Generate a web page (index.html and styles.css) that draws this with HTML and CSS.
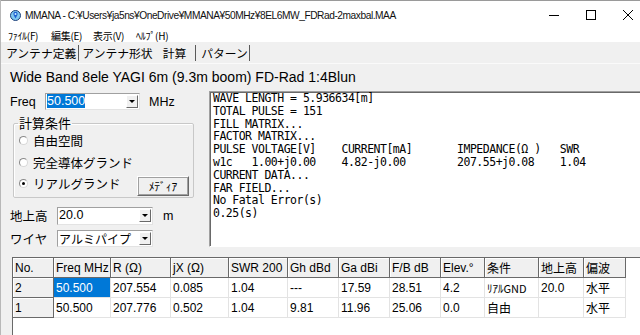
FILE: index.html
```html
<!DOCTYPE html>
<html lang="ja">
<head>
<meta charset="utf-8">
<title>MMANA</title>
<link rel="stylesheet" href="styles.css">
</head>
<body>
<div class="window">
  <div class="titlebar">
    <svg class="appicon" width="11" height="13" viewBox="0 0 11 13">
      <circle cx="5.5" cy="6.5" r="5" fill="#7fc8f0" stroke="#1c3f7a" stroke-width="1"/>
      <path d="M5.5 2.8 C3.6 2.8 3 4.6 3.6 6 L5.5 9.6 L7.4 6 C8 4.6 7.4 2.8 5.5 2.8 Z" fill="#1f5fd0"/>
      <circle cx="5.5" cy="5" r="1" fill="#cfefff"/>
    </svg>
    <span class="title">MMANA - C:¥Users¥ja5ns¥OneDrive¥MMANA¥50MHz¥8EL6MW_FDRad-2maxbal.MAA</span>
    <div class="winbtns">
      <svg width="10" height="10" viewBox="0 0 10 10"><path d="M0 5.5 H10" stroke="#000" stroke-width="1"/></svg>
      <svg width="10" height="10" viewBox="0 0 10 10"><rect x="0.5" y="0.5" width="9" height="9" fill="none" stroke="#000" stroke-width="1"/></svg>
      <svg width="10" height="10" viewBox="0 0 10 10"><path d="M0 0 L10 10 M10 0 L0 10" stroke="#000" stroke-width="1"/></svg>
    </div>
  </div>
  <div class="menubar">
    <span class="menu">ﾌｧｲﾙ(F)</span>
    <span class="menu">編集(E)</span>
    <span class="menu">表示(V)</span>
    <span class="menu">ﾍﾙﾌﾟ(H)</span>
  </div>
  <div class="tabs">
    <span class="tab t1 sep">アンテナ定義</span>
    <span class="tab t2">アンテナ形状</span>
    <span class="tab t3 active sep">計算</span>
    <span class="tab t4 sep">パターン</span>
  </div>
  <div class="heading">Wide Band 8ele YAGI 6m (9.3m boom) FD-Rad 1:4Blun</div>
  <div class="main">
    <div class="left">
      <div class="row freqrow">
        <span class="lbl">Freq</span>
        <div class="combo freqcombo"><span class="val"><span class="selected">50.500</span></span><span class="drop"></span></div>
        <span class="unit">MHz</span>
      </div>
      <fieldset class="group">
        <legend>計算条件</legend>
        <div class="radio"><span class="rb"></span><span class="rt">自由空間</span></div>
        <div class="radio"><span class="rb"></span><span class="rt">完全導体グランド</span></div>
        <div class="radio"><span class="rb checked"></span><span class="rt">リアルグランド</span><button class="btn">ﾒﾃﾞｨｱ</button></div>
      </fieldset>
      <div class="row hrow">
        <span class="lbl jlbl">地上高</span>
        <div class="combo ccombo"><span class="val">20.0</span><span class="drop"></span></div>
        <span class="unit munit">m</span>
      </div>
      <div class="row wrow">
        <span class="lbl jlbl">ワイヤ</span>
        <div class="combo ccombo"><span class="val jval">アルミパイプ</span><span class="drop"></span></div>
      </div>
    </div>
    <pre class="output">WAVE LENGTH = 5.936634[m]
TOTAL PULSE = 151
FILL MATRIX...
FACTOR MATRIX...
PULSE VOLTAGE[V]    CURRENT[mA]       IMPEDANCE(Ω )   SWR
w1c   1.00+j0.00    4.82-j0.00        207.55+j0.08    1.04
CURRENT DATA...
FAR FIELD...
No Fatal Error(s)
0.25(s)</pre>
  </div>
  <div class="gridwrap">
    <table class="grid">
      <colgroup>
        <col style="width:41px"><col style="width:57px"><col style="width:60px"><col style="width:58px">
        <col style="width:59px"><col style="width:51px"><col style="width:51px"><col style="width:51px">
        <col style="width:44px"><col style="width:54px"><col style="width:45px"><col style="width:42px">
      </colgroup>
      <thead>
        <tr>
          <th>No.</th><th>Freq MHz</th><th>R (Ω)</th><th>jX (Ω)</th><th>SWR 200</th><th>Gh dBd</th>
          <th>Ga dBi</th><th>F/B dB</th><th>Elev.°</th><th>条件</th><th>地上高</th><th>偏波</th>
        </tr>
      </thead>
      <tbody>
        <tr>
          <th>2</th><td class="selected">50.500</td><td>207.554</td><td>0.085</td><td>1.04</td><td>---</td>
          <td>17.59</td><td>28.51</td><td>4.2</td><td class="small">ﾘｱﾙGND</td><td>20.0</td><td>水平</td>
        </tr>
        <tr>
          <th>1</th><td>50.500</td><td>207.776</td><td>0.502</td><td>1.04</td><td>9.81</td>
          <td>11.96</td><td>25.06</td><td>0.0</td><td>自由</td><td></td><td>水平</td>
        </tr>
      </tbody>
    </table>
  </div>
</div>
</body>
</html>
```
FILE: styles.css
```css
html, body {
  margin: 0;
  padding: 0;
}
body {
  width: 640px;
  height: 335px;
  overflow: hidden;
  background: #f0f0f0;
  font-family: "Liberation Sans", "Noto Sans CJK JP", sans-serif;
  font-size: 12px;
  color: #000;
}
.window {
  width: 640px;
  height: 335px;
  display: flex;
  flex-direction: column;
  overflow: hidden;
  border-left: 1px solid #b8b8b8;
  box-sizing: border-box;
}
.titlebar {
  height: 29px;
  flex: none;
  background: #fff;
  border-top: 1px solid #9a9a9a;
  box-sizing: border-box;
  display: flex;
  align-items: center;
  padding-left: 9px;
}
.appicon {
  flex: none;
  margin-top: 1px;
}
.title {
  margin-left: 4px;
  font-family: "Liberation Sans", "Noto Sans CJK JP", sans-serif;
  font-size: 10.2px;
  letter-spacing: -0.45px;
  white-space: nowrap;
  color: #111;
}
.winbtns {
  margin-left: auto;
  display: flex;
  gap: 27px;
  padding-right: 7px;
  align-items: center;
}
.menubar {
  height: 13px;
  flex: none;
  background: #fff;
  display: grid;
  grid-template-columns: 43px 42px 43px 43px;
  align-items: center;
  font-size: 10px;
  font-family: "Noto Sans CJK JP", sans-serif;
  line-height: 13px;
  padding-left: 7px;
}
.menu { white-space: nowrap; letter-spacing: -0.3px; }
.tabs {
  height: 22px;
  flex: none;
  box-sizing: border-box;
  border-bottom: 1px solid #fafafa;
  display: flex;
  align-items: center;
  padding-left: 5px;
  font-family: "Noto Sans CJK JP", sans-serif;
  font-size: 11.8px;
}
.tab {
  white-space: nowrap;
  line-height: 16px;
  padding: 0 2px 0 0;
}
.tab.sep { border-right: 1px solid #5a5a5a; }
.t2 { margin-left: 3px; }
.t3 { margin-left: 8px; padding-right: 9px; }
.t4 { margin-left: 5px; padding-right: 1px; }
.heading {
  height: 27px;
  flex: none;
  line-height: 26px;
  padding-left: 9px;
  font-family: "Liberation Sans", "Noto Sans CJK JP", sans-serif;
  font-size: 14px;
  white-space: nowrap;
}
.main {
  display: flex;
  height: 156px;
  flex: none;
}
.left {
  width: 207px;
  flex: none;
  padding-left: 9px;
  box-sizing: border-box;
}
.row {
  display: flex;
  align-items: center;
}
.freqrow {
  margin-top: 2px;
  height: 17px;
}
.lbl {
  font-family: "Liberation Sans", "Noto Sans CJK JP", sans-serif;
  font-size: 12.5px;
  width: 35px;
  flex: none;
}
.jlbl {
  font-family: "Noto Sans CJK JP", sans-serif;
  font-size: 12.5px;
  width: 47px;
}
.combo {
  height: 17px;
  box-sizing: border-box;
  background: #fff;
  border: 1px solid #a0a0a0;
  border-right-color: #e3e3e3;
  border-bottom-color: #e3e3e3;
  display: flex;
  align-items: center;
  padding-left: 1px;
}
.freqcombo { width: 95px; }
.ccombo { width: 96px; height: 18px; }
.wrow .ccombo { height: 17px; }
.val {
  flex: 1;
  font-size: 12.5px;
  line-height: 13px;
  font-family: "Liberation Sans", "Noto Sans CJK JP", sans-serif;
}
.selected {
  background: #0078d7;
  color: #fff;
}
.jval {
  font-family: "Noto Sans CJK JP", sans-serif;
  font-size: 12px;
}
.drop {
  width: 12px;
  height: 13px;
  margin-right: 1px;
  box-sizing: border-box;
  background: #f0f0f0;
  border: 1px solid #fff;
  border-right-color: #696969;
  border-bottom-color: #696969;
  position: relative;
  flex: none;
}
.drop::after {
  content: "";
  position: absolute;
  left: 2px;
  top: 4px;
  border-left: 3px solid transparent;
  border-right: 3px solid transparent;
  border-top: 3px solid #000;
}
.unit {
  margin-left: 9px;
  font-size: 12.5px;
}
.munit { margin-left: 10px; }
.group {
  margin: 6px 0 0 3px;
  width: 181px;
  box-sizing: border-box;
  padding: 0 4px 2px 5px;
  border: 1px solid #c8c8c8;
  border-radius: 2px;
  box-shadow: inset 1px 1px 0 #fff;
}
.group legend {
  font-family: "Noto Sans CJK JP", sans-serif;
  font-size: 13px;
  line-height: 14px;
  padding: 0 1px;
  margin-left: -1px;
}
.radio {
  height: 21.5px;
  display: flex;
  align-items: center;
  font-family: "Noto Sans CJK JP", sans-serif;
  font-size: 12.5px;
}
.rb {
  width: 9px;
  height: 9px;
  box-sizing: border-box;
  border-radius: 50%;
  background: #fff;
  border: 1px solid #8a8a8a;
  border-right-color: #d8d8d8;
  border-bottom-color: #d8d8d8;
  position: relative;
  flex: none;
}
.rb.checked::after {
  content: "";
  position: absolute;
  left: 2px;
  top: 2px;
  width: 3px;
  height: 3px;
  border-radius: 50%;
  background: #000;
}
.rt { margin-left: 5px; white-space: nowrap; }
.btn {
  margin-left: auto;
  margin-top: 4px;
  width: 52px;
  height: 20px;
  box-sizing: border-box;
  background: #f0f0f0;
  border: 1px solid #fff;
  border-right-color: #696969;
  border-bottom-color: #696969;
  box-shadow: 1px 1px 0 #a0a0a0 inset, -1px -1px 0 #a0a0a0 inset;
  font-family: "Noto Sans CJK JP", sans-serif;
  font-size: 11.5px;
  padding: 0;
  color: #000;
}
.hrow {
  margin-top: 9px;
  height: 18px;
}
.wrow {
  margin-top: 5px;
  height: 17px;
}
.output {
  margin: 0 0 0 1px;
  width: 440px;
  height: 156px;
  flex: none;
  box-sizing: border-box;
  background: #fff;
  border: 1px solid #a0a0a0;
  border-right-color: #fff;
  border-bottom-color: #fff;
  box-shadow: inset 1px 1px 0 #696969;
  padding: 0 0 0 3px;
  font-family: "DejaVu Sans Mono", monospace;
  font-size: 11.5px;
  letter-spacing: -0.5px;
  line-height: 12.8px;
  white-space: pre;
  overflow: hidden;
}
.gridwrap {
  margin: 10px 0 0 11px;
  flex: 1;
  background: #fff;
  border-left: 1px solid #696969;
  border-top: 1px solid #696969;
}
.grid {
  border-collapse: separate;
  border-spacing: 0;
  table-layout: fixed;
  width: 613px;
  font-family: "Liberation Sans", "Noto Sans CJK JP", sans-serif;
  font-size: 12px;
}
.grid th, .grid td {
  height: 20px;
  box-sizing: border-box;
  padding: 0 0 0 2px;
  text-align: left;
  font-weight: normal;
  white-space: nowrap;
  overflow: hidden;
}
.grid th {
  background: #f0f0f0;
  border-right: 1px solid #696969;
  border-bottom: 1px solid #696969;
  box-shadow: inset 1px 1px 0 #fff;
}
.grid td {
  background: #fff;
  border-right: 1px solid #e3e3e3;
  border-bottom: 1px solid #e3e3e3;
}
.grid td.selected {
  background: #0078d7;
  color: #fff;
}
.grid td.small {
  font-family: "Noto Sans CJK JP", sans-serif;
  font-size: 11px;
}
```
